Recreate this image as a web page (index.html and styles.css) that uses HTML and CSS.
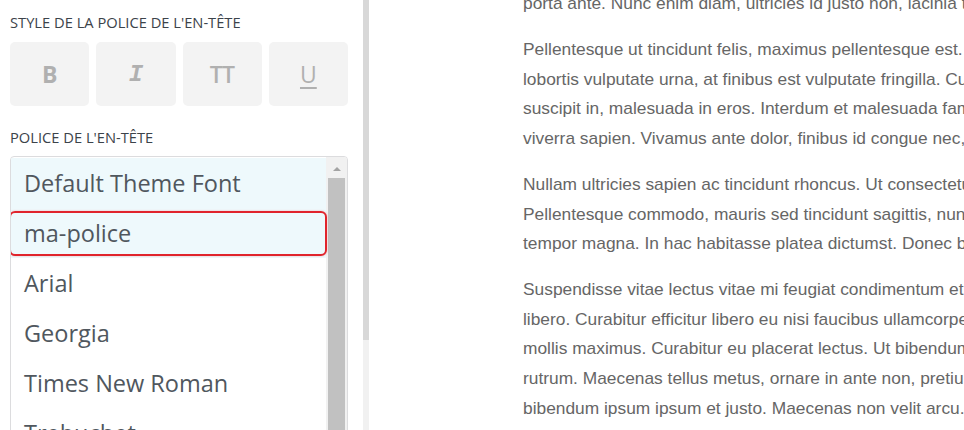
FILE: index.html
```html
<!DOCTYPE html>
<html lang="fr">
<head>
  <meta charset="UTF-8" />
  <meta name="viewport" content="width=device-width, initial-scale=1.0"/>
  <title>Police de l'en-tête</title>
  <link rel="stylesheet" href="styles.css">
</head>
<body>

  <div class="layout">
    <aside class="sidebar">
      <div class="sidebar-inner">
        <h3 class="field-label">Style de la police de l'en-tête</h3>
        <div class="style-buttons">
          <button class="style-btn btn-bold">B</button>
          <button class="style-btn btn-italic">I</button>
          <button class="style-btn btn-caps">TT</button>
          <button class="style-btn btn-underline">U</button>
        </div>

        <h3 class="field-label label-font">Police de l'en-tête</h3>
        <div class="font-list">
          <ul class="font-options">
            <li class="hovered">Default Theme Font</li>
            <li class="selected">ma-police</li>
            <li>Arial</li>
            <li>Georgia</li>
            <li>Times New Roman</li>
            <li>Trebuchet</li>
          </ul>
          <div class="list-scrollbar">
            <span class="arrow-up"></span>
            <span class="list-thumb"></span>
          </div>
        </div>
      </div>
      <div class="panel-scrollbar"><div class="panel-thumb"></div></div>
    </aside>

    <main class="preview">
      <p class="first">porta ante. Nunc enim diam, ultricies id justo non, lacinia tempus nisl.</p>
      <p>Pellentesque ut tincidunt felis, maximus pellentesque est. Nam<br>
        lobortis vulputate urna, at finibus est vulputate fringilla. Curabitur<br>
        suscipit in, malesuada in eros. Interdum et malesuada fames ac ante<br>
        viverra sapien. Vivamus ante dolor, finibus id congue nec, dictum</p>
      <p>Nullam ultricies sapien ac tincidunt rhoncus. Ut consectetur<br>
        Pellentesque commodo, mauris sed tincidunt sagittis, nunc<br>
        tempor magna. In hac habitasse platea dictumst. Donec blandit</p>
      <p>Suspendisse vitae lectus vitae mi feugiat condimentum et<br>
        libero. Curabitur efficitur libero eu nisi faucibus ullamcorper<br>
        mollis maximus. Curabitur eu placerat lectus. Ut bibendum<br>
        rutrum. Maecenas tellus metus, ornare in ante non, pretium<br>
        bibendum ipsum ipsum et justo. Maecenas non velit arcu.</p>
    </main>
  </div>

</body>
</html>
```

FILE: styles.css
```css
body {
  margin: 0;
  height: 430px;
  overflow: hidden;
  background: #fff;
  font-family: "Open Sans", sans-serif;
}
.layout {
  display: flex;
  height: 430px;
}
.sidebar {
  display: flex;
  width: 370px;
  flex-shrink: 0;
  background: #fff;
}
.sidebar-inner {
  width: 338px;
  padding: 12px 15px 0 10px;
}
.field-label {
  margin: 0;
  font-size: 14.7px;
  line-height: 20px;
  font-weight: normal;
  text-transform: uppercase;
  color: #3c434a;
}
.style-buttons {
  display: grid;
  grid-template-columns: repeat(4, 1fr);
  gap: 7px;
  margin-top: 10px;
}
.style-btn {
  height: 64px;
  border: none;
  border-radius: 5px;
  background: #f3f3f3;
  color: #b0b0b0;
  font-family: "Open Sans", sans-serif;
  font-size: 23px;
  padding: 0;
}
.btn-bold {
  font-weight: bold;
}
.btn-italic {
  font-family: "Liberation Mono", monospace;
  font-style: italic;
  font-weight: bold;
  font-size: 24px;
}
.btn-caps {
  font-weight: 600;
  letter-spacing: -0.5px;
}
.btn-underline {
  text-decoration: underline;
  text-decoration-thickness: 2px;
  text-underline-offset: 4px;
}
.label-font {
  margin-top: 21px;
}
.font-list {
  display: flex;
  margin-top: 9px;
  height: 300px;
  border: 1px solid #dcdcde;
  border-radius: 4px;
  overflow: hidden;
}
.font-options {
  flex: 1;
  list-style: none;
  margin: 0;
  padding: 1px 0 0;
}
.font-options li {
  position: relative;
  height: 50px;
  line-height: 50px;
  padding-left: 13px;
  font-size: 23.5px;
  color: #50575e;
}
.font-options li.hovered,
.font-options li.selected {
  background: #eef9fc;
}
.font-options li.selected::after {
  content: "";
  position: absolute;
  top: 3px;
  bottom: 2px;
  left: -2px;
  right: -1px;
  border: 2px solid #e0242c;
  border-radius: 6px;
  box-shadow: 0 0 2px rgba(224, 36, 44, 0.35);
}
.list-scrollbar {
  display: flex;
  flex-direction: column;
  align-items: center;
  width: 21px;
  background: #f1f1f1;
}
.arrow-up {
  margin-top: 10px;
  width: 0;
  height: 0;
  border-left: 4.5px solid transparent;
  border-right: 4.5px solid transparent;
  border-bottom: 4px solid #a3a3a3;
}
.list-thumb {
  margin-top: 7px;
  width: 17px;
  flex: 1;
  background: #c1c1c1;
}
.panel-scrollbar {
  width: 6px;
  margin-left: auto;
  margin-right: 1px;
  background: #f1f1f1;
}
.panel-thumb {
  height: 340px;
  background: #d8d8d8;
}
.preview {
  flex: 1;
  padding-left: 153px;
  overflow: hidden;
  font-family: "Liberation Sans", Arial, sans-serif;
  font-size: 17.35px;
  line-height: 29.6px;
  color: #666;
  white-space: nowrap;
}
.preview p {
  margin: 0 0 16.5px;
}
.preview p.first {
  margin-top: -11px;
}
```
